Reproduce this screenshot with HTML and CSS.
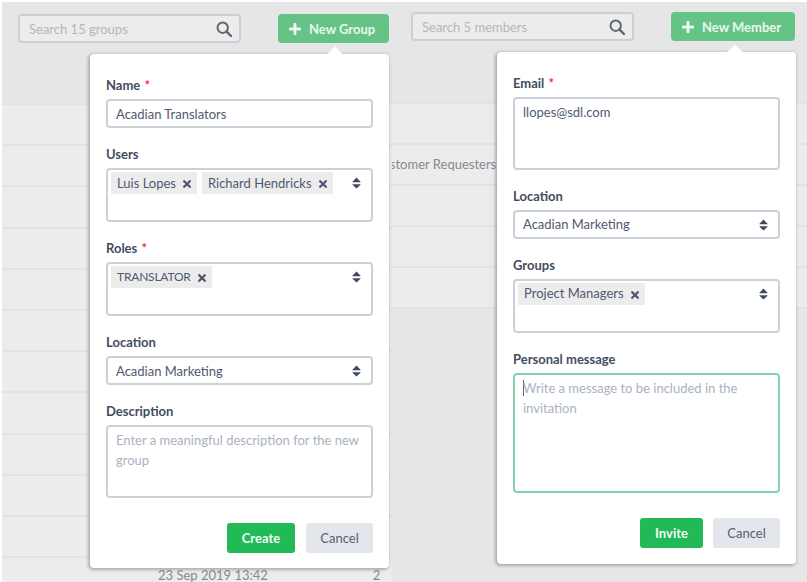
FILE: index.html
```html
<!DOCTYPE html>
<html lang="en">
<head>
<meta charset="utf-8">
<title>New Group and New Member</title>
<link rel="stylesheet" href="styles.css">
</head>
<body>
<svg class="defs" width="0" height="0" aria-hidden="true">
  <symbol id="i-search" viewBox="0 0 16 16"><circle cx="6.7" cy="6.7" r="5.2" fill="none" stroke="currentColor" stroke-width="2"/><path d="M10.6 10.6 15 15" fill="none" stroke="currentColor" stroke-width="2.4" stroke-linecap="round"/></symbol>
  <symbol id="i-plus" viewBox="0 0 12 12"><path d="M6 1v10M1 6h10" fill="none" stroke="currentColor" stroke-width="2.8" stroke-linecap="round"/></symbol>
  <symbol id="i-x" viewBox="0 0 8 8"><path d="M1.2 1.2 6.8 6.8M6.8 1.2 1.2 6.8" fill="none" stroke="currentColor" stroke-width="2.3" stroke-linecap="round"/></symbol>
  <symbol id="i-sort" viewBox="0 0 9 12"><path d="M4.5 .5 8.5 4.8a.3.3 0 0 1-.2.5H.7a.3.3 0 0 1-.2-.5zM4.5 11.5 .5 7.7a.3.3 0 0 1 .2-.5H8.3a.3.3 0 0 1 .2.5z" fill="currentColor"/></symbol>
</svg>

<main class="panes">
  <section class="pane pane-left">
    <div class="toolbar toolbar-left">
      <div class="search"><span class="search-text">Search 15 groups</span><svg class="search-icon"><use href="#i-search"/></svg></div>
      <button class="new-btn new-group" type="button"><svg class="plus"><use href="#i-plus"/></svg>New Group</button>
    </div>
    <div class="rows rows-left">
      <div class="row"></div><div class="row"></div><div class="row"></div><div class="row"></div>
      <div class="row"></div><div class="row"></div><div class="row"></div><div class="row"></div>
      <div class="row"></div><div class="row"></div><div class="row"></div>
      <div class="row row-last"><span class="cell-date">23 Sep 2019 13:42</span><span class="cell-count">2</span></div>
    </div>

    <form class="popover popover-group">
      <div class="field"><label class="label">Name <i class="req">*</i></label>
        <div class="control control-one">Acadian Translators</div></div>
      <div class="field"><label class="label">Users</label>
        <div class="control control-multi">
          <span class="tag">Luis Lopes<svg class="tag-x"><use href="#i-x"/></svg></span>
          <span class="tag">Richard Hendricks<svg class="tag-x"><use href="#i-x"/></svg></span>
          <svg class="sort"><use href="#i-sort"/></svg>
        </div></div>
      <div class="field"><label class="label">Roles <i class="req">*</i></label>
        <div class="control control-multi">
          <span class="tag tag-caps">TRANSLATOR<svg class="tag-x"><use href="#i-x"/></svg></span>
          <svg class="sort"><use href="#i-sort"/></svg>
        </div></div>
      <div class="field"><label class="label">Location</label>
        <div class="control control-one">Acadian Marketing<svg class="sort"><use href="#i-sort"/></svg></div></div>
      <div class="field"><label class="label">Description</label>
        <div class="control control-area area-short placeholder">Enter a meaningful description for the new group</div></div>
      <div class="actions">
        <button class="btn btn-create" type="button">Create</button>
        <button class="btn btn-cancel" type="button">Cancel</button>
      </div>
    </form>
  </section>

  <section class="pane pane-right">
    <div class="toolbar toolbar-right">
      <div class="search"><span class="search-text">Search 5 members</span><svg class="search-icon"><use href="#i-search"/></svg></div>
      <button class="new-btn new-member" type="button"><svg class="plus"><use href="#i-plus"/></svg>New Member</button>
    </div>
    <div class="rows rows-right">
      <div class="row"></div>
      <div class="row"><span class="cell-req">Customer Requesters</span></div>
      <div class="row"></div>
      <div class="row"></div>
      <div class="row"></div>
      <div class="row row-end"></div>
    </div>

    <form class="popover popover-member">
      <div class="field"><label class="label">Email <i class="req">*</i></label>
        <div class="control control-area area-short value">llopes@sdl.com</div></div>
      <div class="field"><label class="label">Location</label>
        <div class="control control-one">Acadian Marketing<svg class="sort"><use href="#i-sort"/></svg></div></div>
      <div class="field"><label class="label">Groups</label>
        <div class="control control-multi">
          <span class="tag">Project Managers<svg class="tag-x"><use href="#i-x"/></svg></span>
          <svg class="sort"><use href="#i-sort"/></svg>
        </div></div>
      <div class="field"><label class="label">Personal message</label>
        <div class="control control-area area-tall placeholder focused"><span class="caret"></span>Write a message to be included in the invitation</div></div>
      <div class="actions">
        <button class="btn btn-invite" type="button">Invite</button>
        <button class="btn btn-cancel" type="button">Cancel</button>
      </div>
    </form>
  </section>
</main>
</body>
</html>
```

FILE: styles.css
```css
* { box-sizing: border-box; }
html, body { margin: 0; height: 100%; overflow: hidden; }
body {
  font-family: "Lato", "Liberation Sans", sans-serif;
  font-size: 13px;
  color: #4f5a70;
  background: #fff;
}
.defs { position: absolute; }

.panes { display: flex; width: 807px; height: 582px; }
.pane { position: relative; background: #e6e6e6; }
.pane-left { width: 390px; height: 579px; margin: 2px 0 0 2px; flex: none; z-index: 1; }
.pane-right { flex: 1; height: 580px; margin-top: 2px; }

.toolbar { display: flex; height: 29px; }
.toolbar-left { margin: 12px 0 0 16px; }
.toolbar-right { margin: 10px 0 0 19px; }

.search {
  width: 223px;
  height: 29px;
  display: flex;
  align-items: center;
  justify-content: space-between;
  padding: 0 7px 0 9px;
  border: 2px solid #cbd0d6;
  border-radius: 4px;
  background: #ececec;
}
.search-text { color: #b2b8c0; }
.search-icon { width: 16px; height: 16px; color: #5d6672; }

.new-btn {
  display: flex;
  align-items: center;
  height: 29px;
  padding: 0 0 0 11px;
  border: 0;
  border-radius: 4px;
  background: #66c386;
  color: #e9f6ed;
  font: inherit;
  font-weight: 700;
}
.new-group { width: 111px; margin-left: 37px; }
.new-member { width: 124px; margin-left: 37px; }
.plus { width: 12px; height: 12px; margin-right: 8px; color: #eef8f1; }

.rows { position: absolute; left: 0; right: 0; }
.rows-left { top: 101px; }
.rows-right { top: 100px; }
.row {
  height: 41.2px;
  padding-top: 9px;
  border-top: 2px solid #e2e3e3;
  background: #ececec;
  color: #85888c;
  white-space: nowrap;
}
.rows-right .row { height: 41px; padding-top: 11px; }
.rows-right .row-end { height: 2px; padding: 0; }
.row-last { display: flex; height: 40px; }
.cell-date { margin-left: 156px; }
.cell-count { margin-left: 105px; }
.cell-req { display: block; margin-left: -18px; }

.popover {
  position: absolute;
  width: 299px;
  padding: 22px 16px 15px;
  background: #fff;
  border-radius: 4px;
  box-shadow: -1px 1px 3px 1px rgba(90, 100, 115, .45);
}
.popover::before {
  content: "";
  position: absolute;
  top: -5px;
  width: 12px;
  height: 12px;
  background: #fff;
  transform: rotate(45deg);
}
.popover-group { left: 88px; top: 52px; }
.popover-group::before { left: 239px; }
.popover-member { left: 105px; top: 50px; padding-top: 21.5px; padding-bottom: 16.5px; }
.popover-member::before { left: 232px; }

.field { position: relative; margin-bottom: 17px; }
.field:last-of-type { margin-bottom: 0; }
.label {
  display: block;
  height: 18px;
  margin-bottom: 5px;
  line-height: 18px;
  font-weight: 700;
  color: #434d62;
}
.req { font-style: normal; color: #ef2b55; margin-left: 1px; }

.control {
  position: relative;
  border: 2px solid #cbd1d9;
  border-radius: 4px;
  background: #fff;
  line-height: 20px;
}
.control-one { height: 29px; display: flex; align-items: center; padding: 0 8px; }
.control-multi { height: 54px; display: flex; align-items: flex-start; gap: 5px; padding: 2px 3px; }
.control-area { padding: 3px 8px; }
.area-short { height: 73px; }
.area-tall { height: 120px; }
.placeholder { color: #a9b2bf; }
.focused { border-color: #82d3b0; }
.caret {
  display: inline-block;
  width: 1px;
  height: 16px;
  margin-right: -1px;
  vertical-align: -3px;
  background: #5a6280;
}

.tag {
  display: inline-flex;
  align-items: center;
  height: 22px;
  padding: 0 6px 1px;
  background: #ececec;
  white-space: nowrap;
}
.tag-caps { font-size: 12px; letter-spacing: -.2px; }
.tag-x { width: 8px; height: 8px; margin: 3px 0 0 7px; color: #4f5a70; }
.sort { position: absolute; right: 10px; top: 7px; width: 9px; height: 12px; color: #3f4a60; }

.actions { display: flex; justify-content: flex-end; gap: 11px; margin-top: 25px; }
.popover-member .actions { gap: 10px; }
.btn {
  height: 30px;
  border: 0;
  border-radius: 3px;
  font: inherit;
  padding: 0;
}
.btn-create { width: 68px; background: #21ba57; color: #f2fbf5; font-weight: 700; }
.btn-invite { width: 63px; background: #21ba57; color: #f2fbf5; font-weight: 700; }
.btn-cancel { width: 67px; background: #e3e7ec; color: #535d73; }
```
